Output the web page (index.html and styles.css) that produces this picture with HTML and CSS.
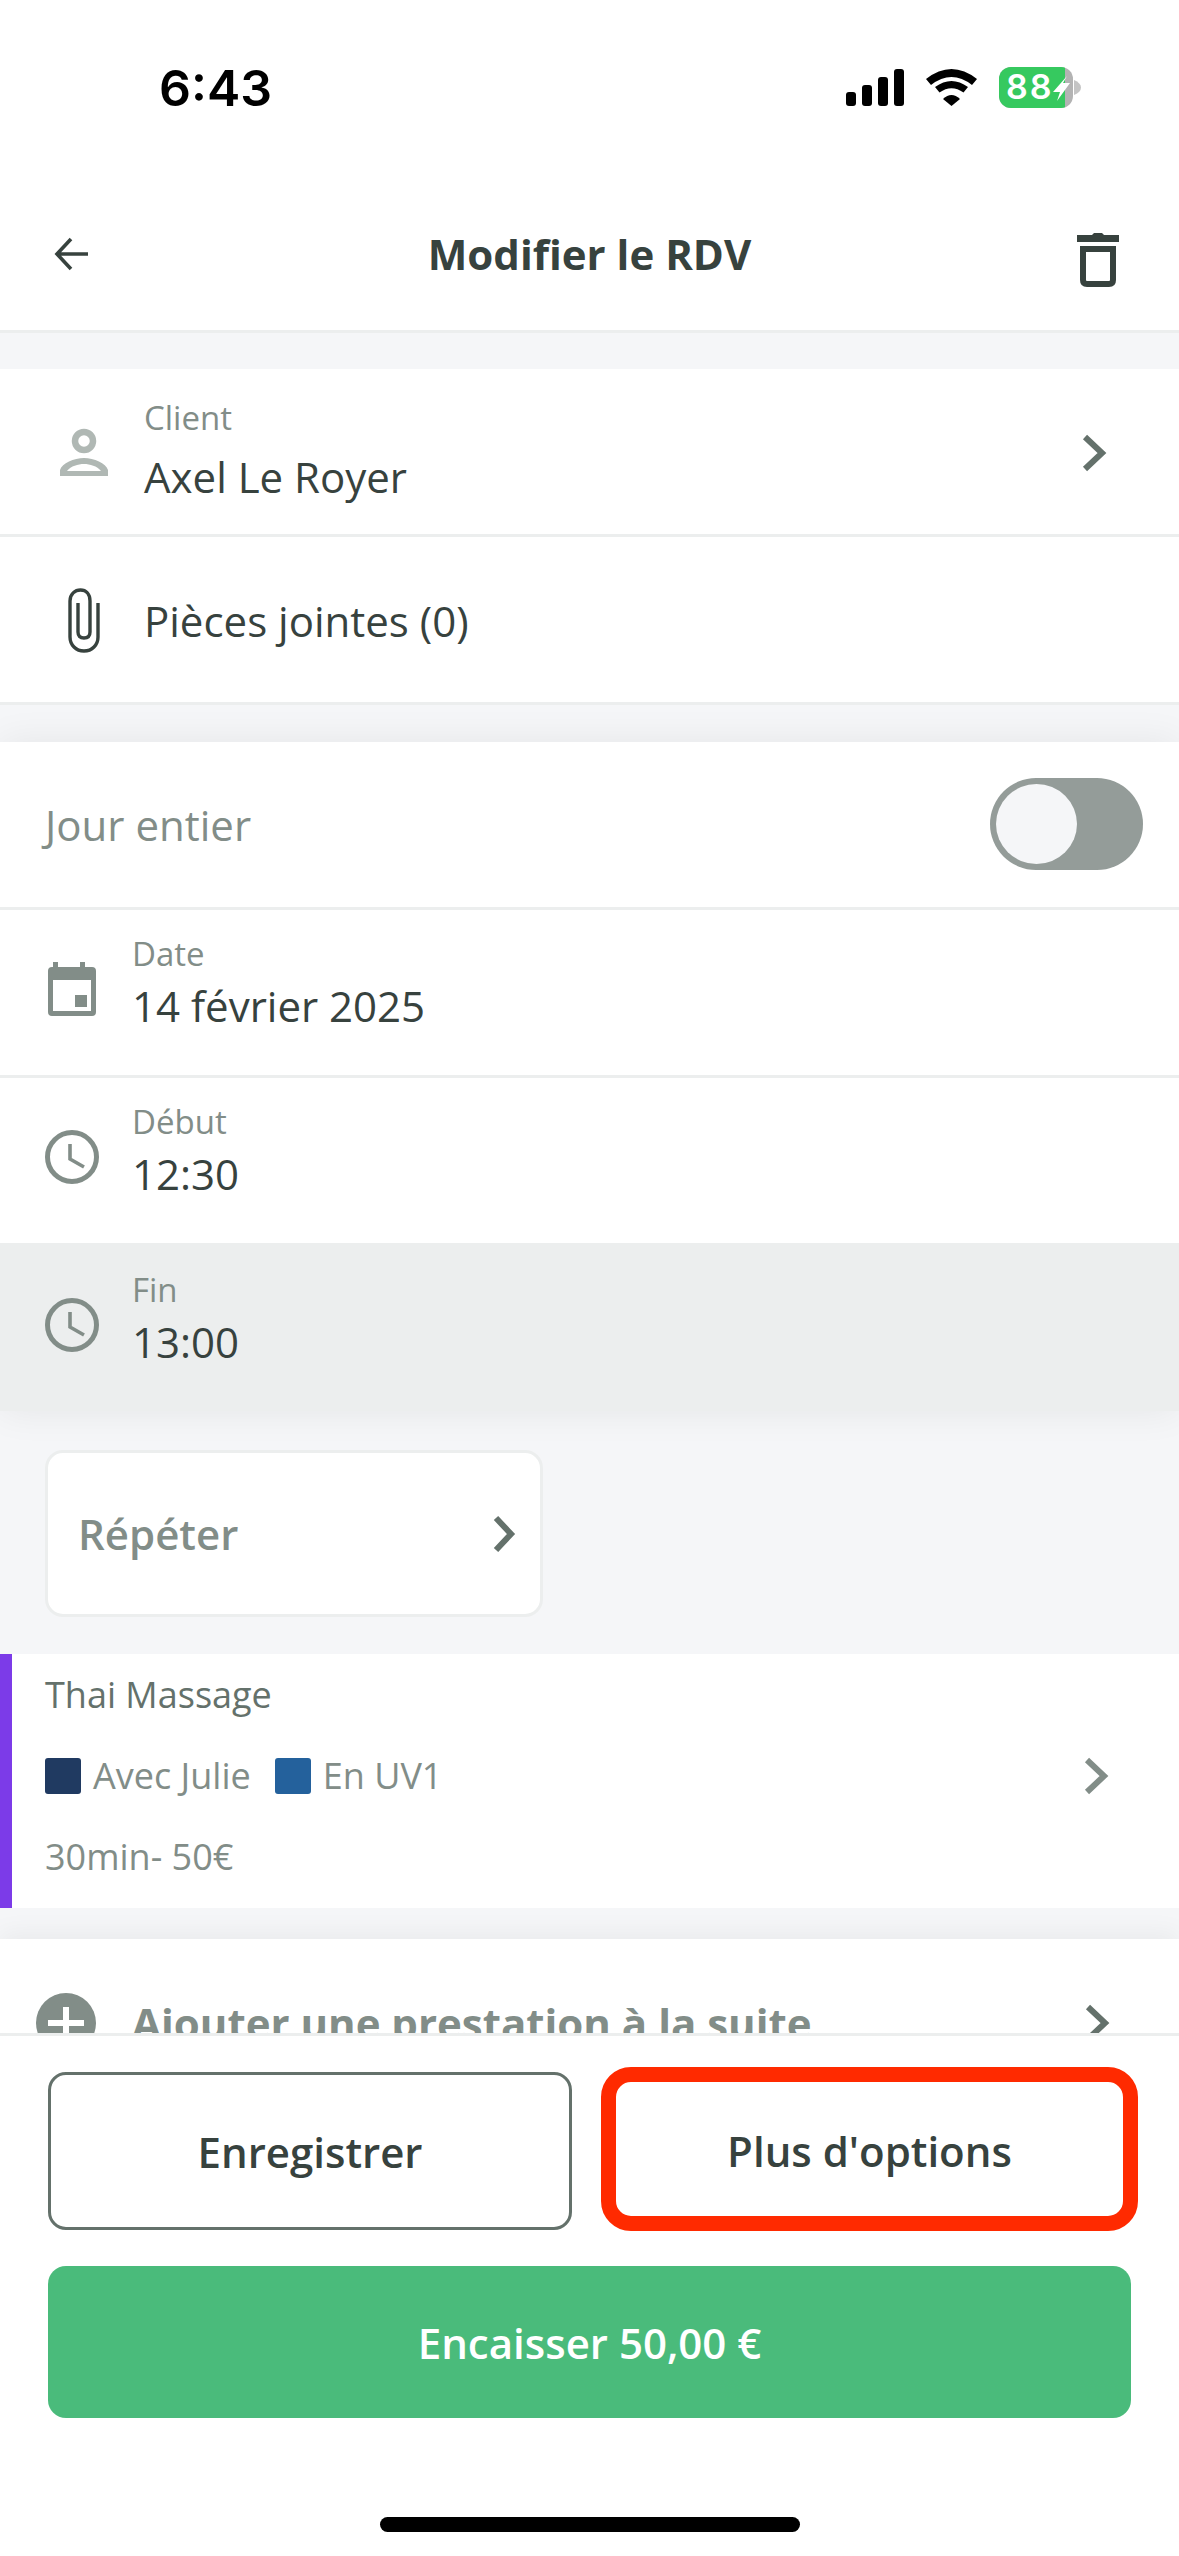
FILE: index.html
```html
<!DOCTYPE html>
<html lang="fr">
<head>
<meta charset="utf-8">
<title>Modifier le RDV</title>
<link rel="stylesheet" href="styles.css">
</head>
<body>
<div class="screen">
  <div class="status">
    <span class="time">6:43</span>
    <div class="status-icons">
      <svg class="ic-signal" width="58" height="37" viewBox="0 0 58 37"><rect x="0" y="23" width="10" height="14" rx="3"/><rect x="16" y="16" width="10" height="21" rx="3"/><rect x="32" y="8" width="10" height="29" rx="3"/><rect x="48" y="0" width="10" height="37" rx="3"/></svg>
      <svg class="ic-wifi" width="51" height="37" viewBox="0 0 51 37"><path d="M0 10Q25.500-10 51 10L46 16Q25.500 0 5 16Z"/><path d="M9 18Q25.500 6 42 18L37.500 23.500Q25.500 15 13.500 23.500Z"/><path d="M17 30Q25.500 22 34 30L25.500 37Z"/></svg>
      <svg class="ic-batt" width="82" height="41" viewBox="0 0 82 41"><defs><clipPath id="bc"><rect x="0" y="0" width="66" height="41"/></clipPath></defs><rect x="0" y="0" width="74" height="41" rx="12" fill="#b3b3b3"/><rect x="0" y="0" width="74" height="41" rx="12" fill="#36c95f" clip-path="url(#bc)"/><path d="M75 13Q82 16 82 20.500Q82 25 75 28Z" fill="#c4c4c4"/><text x="7" y="32" class="batt-text">88</text><path d="M68 9L54 25H61L58 34L71 16H64Z" fill="#fff"/></svg>
    </div>
  </div>
  <header class="topbar">
    <svg class="ic-back" width="36" height="34" viewBox="0 0 36 34"><path d="M34 17H3M17 2L3 17L17 32" fill="none" stroke="#37423e" stroke-width="3.600"/></svg>
    <h1 class="title">Modifier le RDV</h1>
    <svg class="ic-trash" width="42" height="54" viewBox="0 0 42 54"><path d="M15 2L17 0H25L27 2H42V9H0V2Z" fill="#37423e"/><path d="M6 16H36V47Q36 51 32 51H10Q6 51 6 47Z" fill="none" stroke="#37423e" stroke-width="6"/></svg>
  </header>

  <main class="scroll">
    <section class="group group-first">
      <div class="row row-line">
        <svg class="ic-person" width="48" height="48" viewBox="0 0 48 48"><circle cx="24" cy="13" r="9" fill="none" stroke="#b0b8b4" stroke-width="6.500"/><path d="M0 48V42C2 35 14 30 24 30C34 30 46 35 48 42V48ZM7 43H41C37 38 30 36 24 36C18 36 11 38 7 43Z" fill="#b0b8b4" fill-rule="evenodd"/></svg>
        <div class="stack stack-client"><span class="label">Client</span><span class="value">Axel Le Royer</span></div>
        <svg class="chev chev-end" width="26" height="38" viewBox="0 0 26 38"><path d="M4 3L21 19L4 35" fill="none" stroke="#64716b" stroke-width="6"/></svg>
      </div>
      <div class="row row-line">
        <svg class="ic-clip" width="32" height="65" viewBox="0 0 32 65"><path d="M30 15V49C30 57 24 63 16 63C8 63 2 57 2 49V13C2 6 7 2 12.500 2C18 2 22 6 22 13V44C22 48 20 50 16 50C12 50 10 48 10 44V15" fill="none" stroke="#37423e" stroke-width="3.400"/></svg>
        <span class="value value-clip">Pièces jointes (0)</span>
      </div>
    </section>

    <section class="group group-shadow">
      <div class="row row-line">
        <span class="value-muted">Jour entier</span>
        <div class="toggle"><div class="knob"></div></div>
      </div>
      <div class="row row-line">
        <svg class="ic-time" width="54" height="54" viewBox="0 0 54 54"><path d="M8 0H13V5H35V0H40V5H47Q51 5 51 9V50Q51 54 47 54H7Q3 54 3 50V9Q3 5 7 5H8ZM8 18V49H46V18ZM30 33H42V45H30Z" fill="#828d88" fill-rule="evenodd"/></svg>
        <div class="stack"><span class="label">Date</span><span class="value">14 février 2025</span></div>
      </div>
      <div class="row">
        <svg class="ic-time" width="54" height="54" viewBox="0 0 54 54"><circle cx="27" cy="27" r="24.500" fill="none" stroke="#828d88" stroke-width="5"/><path d="M25 14V29L39 37" fill="none" stroke="#828d88" stroke-width="3.600"/></svg>
        <div class="stack"><span class="label">Début</span><span class="value">12:30</span></div>
      </div>
      <div class="row row-active">
        <svg class="ic-time" width="54" height="54" viewBox="0 0 54 54"><circle cx="27" cy="27" r="24.500" fill="none" stroke="#828d88" stroke-width="5"/><path d="M25 14V29L39 37" fill="none" stroke="#828d88" stroke-width="3.600"/></svg>
        <div class="stack"><span class="label">Fin</span><span class="value">13:00</span></div>
      </div>
    </section>

    <div class="repeat">
      <span class="repeat-text">Répéter</span>
      <svg class="chev" width="24" height="38" viewBox="0 0 24 38"><path d="M4 3L19 19L4 35" fill="none" stroke="#64716b" stroke-width="6"/></svg>
    </div>

    <section class="service">
      <div class="service-body">
        <span class="service-name">Thai Massage</span>
        <div class="service-tags">
          <i class="swatch swatch-navy"></i><span class="tag tag-first">Avec Julie</span>
          <i class="swatch swatch-blue"></i><span class="tag">En UV1</span>
        </div>
        <span class="service-meta">30min- 50€</span>
      </div>
      <svg class="chev chev-service" width="26" height="38" viewBox="0 0 26 38"><path d="M4 3L21 19L4 35" fill="none" stroke="#828d88" stroke-width="6"/></svg>
    </section>

    <section class="add">
      <svg class="ic-plus" width="60" height="60" viewBox="0 0 60 60"><circle cx="30" cy="30" r="30" fill="#828d88"/><path d="M30 14V46M12 30H48" stroke="#fff" stroke-width="6"/></svg>
      <span class="add-text">Ajouter une prestation à la suite</span>
      <svg class="chev chev-add" width="26" height="38" viewBox="0 0 26 38"><path d="M4 3L21 19L4 35" fill="none" stroke="#64716b" stroke-width="6"/></svg>
    </section>
  </main>

  <footer class="footer">
    <div class="actions">
      <button class="btn btn-save">Enregistrer</button>
      <button class="btn btn-more">Plus d'options</button>
    </div>
    <button class="btn btn-pay">Encaisser 50,00 €</button>
    <div class="home"></div>
  </footer>
</div>
</body>
</html>
```
FILE: styles.css
```css
* { box-sizing: border-box; }
html, body { margin: 0; padding: 0; }
body { background: #fff; font-family: "Open Sans", "Noto Sans", sans-serif; color: #37423e; }
.screen { width: 1179px; height: 2556px; display: flex; flex-direction: column; overflow: hidden; background: #fff; }

.status { height: 150px; flex: none; display: flex; align-items: flex-start; justify-content: space-between; padding: 58px 98px 0 159px; }
.time { font-family: Inter, "Liberation Sans", sans-serif; font-weight: 600; font-size: 50px; line-height: 60px; color: #000; }
.status-icons { display: flex; align-items: flex-start; margin-top: 9px; }
.ic-signal { margin-top: 2px; margin-right: 22px; fill: #000; }
.ic-wifi { margin-top: 2px; margin-right: 22px; fill: #000; }
.batt-text { font-family: Inter, sans-serif; font-weight: 600; font-size: 34px; letter-spacing: 2px; fill: #fff; }

.topbar { height: 183px; flex: none; display: flex; align-items: flex-start; position: relative; padding: 0 60px 0 54px; justify-content: space-between; border-bottom: 3px solid #eceeee; background: #fff; }
.ic-back { margin-top: 87px; }
.ic-trash { margin-top: 83px; }
.title { position: absolute; left: 0; right: 0; top: 76px; margin: 0; text-align: center; font-size: 42px; line-height: 56px; font-weight: 700; color: #37423e; }

.scroll { flex: 1; min-height: 0; overflow: hidden; background: #f5f6f8; display: flex; flex-direction: column; }
.group { background: #fff; flex: none; }
.group-first { margin-top: 36px; }
.group-shadow { margin-top: 37px; box-shadow: 0 0 36px rgba(0, 0, 0, .07); }
.row { height: 165px; display: flex; align-items: center; padding: 0 45px; background: #fff; }
.row-line { height: 168px; border-bottom: 3px solid #eceeee; }
.row-active { background: #eceeee; height: 168px; padding-top: 3px; }

.stack { display: flex; flex-direction: column; margin-left: 33px; margin-top: -20px; }
.stack-client { margin-left: 36px; margin-top: -2px; }
.stack-client .value { margin-top: 7px; }
.label { font-size: 33px; line-height: 46px; color: #828d88; }
.value { font-size: 42px; line-height: 58px; color: #37423e; }
.ic-time { margin-top: -8px; }
.ic-person { margin-left: 15px; }
.ic-clip { margin-left: 23px; margin-top: 2px; }
.value-clip { margin-left: 44px; margin-top: 3px; }
.chev-end { margin-left: auto; margin-right: 27px; margin-top: 2px; }
.value-muted { font-size: 42px; color: #828d88; margin-left: 0; }

.toggle { margin-left: auto; margin-right: -9px; margin-top: -2px; width: 153px; height: 92px; border-radius: 46px; background: #949c99; padding: 6px; }
.knob { width: 81px; height: 80px; border-radius: 50%; background: #f5f6f8; }

.repeat { flex: none; margin: 39px 0 0 45px; width: 498px; height: 167px; display: flex; align-items: center; justify-content: space-between; padding: 0 24px 0 30px; background: #fff; border: 3px solid #eceeee; border-radius: 18px; }
.repeat-text { font-size: 42px; font-weight: 600; color: #828d88; }

.service { flex: none; margin-top: 37px; height: 254px; display: flex; align-items: center; background: #fff; border-left: 12px solid #7c3be8; padding-left: 33px; }
.service-body { display: flex; flex-direction: column; margin-top: -10px; }
.service-name { font-size: 36px; line-height: 46px; color: #64716b; }
.service-tags { display: flex; align-items: center; margin: 35px 0 35px; height: 46px; }
.swatch { width: 36px; height: 36px; border-radius: 3px; flex: none; }
.swatch-navy { background: #203a61; }
.swatch-blue { background: #24619c; }
.tag { font-size: 36px; line-height: 46px; color: #828d88; margin-left: 12px; }
.tag-first { margin-right: 24px; }
.service-meta { font-size: 36px; line-height: 46px; color: #828d88; }
.chev-service { margin-left: auto; margin-right: 70px; margin-top: -10px; }

.add { flex: none; margin-top: 31px; height: 168px; display: flex; align-items: center; background: #fff; padding-left: 36px; box-shadow: 0 -6px 24px rgba(0, 0, 0, .05); }
.add-text { margin-left: 36px; margin-top: -2px; font-size: 42px; font-weight: 700; color: #828d88; }
.chev-add { margin-left: auto; margin-right: 69px; }

.footer { flex: none; height: 523px; border-top: 3px solid #eceeee; background: #fff; padding: 31px 0 0 48px; display: flex; flex-direction: column; }
.actions { display: flex; align-items: flex-start; gap: 29px; }
.btn { font-family: "Open Sans", "Noto Sans", sans-serif; font-size: 42px; font-weight: 600; background: #fff; color: #37423e; padding: 0; }
.btn-save { margin-top: 5px; width: 524px; height: 158px; border: 3px solid #64716b; border-radius: 18px; }
.btn-more { width: 537px; height: 164px; border: 15px solid #ff2a00; border-radius: 30px; padding-top: 2px; }
.btn-pay { margin-top: 35px; width: 1083px; height: 152px; border: 0; border-radius: 18px; background: #4abb7b; color: #fff; }
.home { margin: 99px 0 0 332px; width: 420px; height: 15px; border-radius: 8px; background: #000; }
```
